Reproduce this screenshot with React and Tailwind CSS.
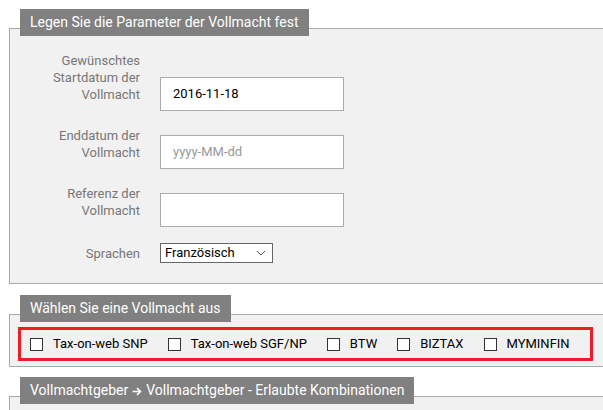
import React from "react";

const font = { fontFamily: "Roboto, 'Liberation Sans', sans-serif" };

function Legend({ children }) {
  return (
    <div className="relative z-10 ml-[11px] inline-block h-[27px] bg-[#808080] px-[10px] text-[14px] leading-[27px] text-white">
      {children}
    </div>
  );
}

function Row({ label, children, center }) {
  return (
    <div className={`flex ${center ? "items-center" : "items-end"}`}>
      <div
        className={`w-[130px] shrink-0 text-right text-[13px] leading-[17px] text-[#777777] ${
          center ? "" : "pb-[8px]"
        }`}
      >
        {label}
      </div>
      <div className="ml-[20px]">{children}</div>
    </div>
  );
}

function TextInput({ value, placeholder }) {
  return (
    <div className="flex h-[34px] w-[184px] items-center border border-[#aaaaaa] bg-white px-[12px] text-[13px]">
      {value ? (
        <span className="text-black">{value}</span>
      ) : (
        <span className="text-[#999999]">{placeholder}</span>
      )}
    </div>
  );
}

function Check({ label }) {
  return (
    <div className="flex items-center">
      <span className="block h-[13px] w-[13px] border border-[#333333] bg-white" />
      <span className="ml-[10px] text-[13px] text-black">{label}</span>
    </div>
  );
}

function Arrow() {
  return (
    <svg className="mx-[4px] inline-block align-middle" width="10" height="9" viewBox="0 0 10 9" fill="none">
      <path d="M0.5 4.5h8M5 1l3.5 3.5L5 8" stroke="white" strokeWidth="1.6" />
    </svg>
  );
}

export default function App() {
  return (
    <div className="h-[410px] w-[603px] overflow-hidden bg-white pt-[9px]" style={font}>
      <div className="ml-[9px] w-[640px]">
        {/* Panel 1 */}
        <Legend>Legen Sie die Parameter der Vollmacht fest</Legend>
        <div className="-mt-[8px] border border-[#aaaaaa] bg-[#f1f1f1] pt-[23px] pb-[20px]">
          <div className="flex flex-col gap-4">
            <Row label={<>Gewünschtes<br />Startdatum der<br />Vollmacht</>}>
              <TextInput value="2016-11-18" />
            </Row>
            <Row label={<>Enddatum der<br />Vollmacht</>}>
              <TextInput placeholder="yyyy-MM-dd" />
            </Row>
            <Row label={<>Referenz der<br />Vollmacht</>}>
              <TextInput />
            </Row>
            <Row label="Sprachen" center>
              <div className="flex h-[20px] w-[113px] items-center justify-between border border-[#666666] bg-white pl-[4px] pr-[6px] text-[13px] text-black">
                <span>Französisch</span>
                <svg width="10" height="6" viewBox="0 0 10 6" fill="none">
                  <path d="M1 1l4 4 4-4" stroke="#555" strokeWidth="1" />
                </svg>
              </div>
            </Row>
          </div>
        </div>

        {/* Panel 2 */}
        <div className="mt-[11px]">
          <Legend>Wählen Sie eine Vollmacht aus</Legend>
        </div>
        <div className="-mt-[8px] border border-[#aaaaaa] bg-[#f1f1f1] pt-[12px] pb-[5px] pl-[8px]">
          <div className="flex h-[34px] w-[575px] items-center gap-[20px] border-[3px] border-[#ee1c25] pl-[9px]">
            <Check label="Tax-on-web SNP" />
            <Check label="Tax-on-web SGF/NP" />
            <Check label="BTW" />
            <Check label="BIZTAX" />
            <Check label="MYMINFIN" />
          </div>
        </div>

        {/* Panel 3 */}
        <div className="mt-[10px]">
          <Legend>
            Vollmachtgeber<Arrow />Vollmachtgeber - Erlaubte Kombinationen
          </Legend>
        </div>
        <div className="-mt-[8px] h-[60px] border border-[#aaaaaa] bg-[#f1f1f1]" />
      </div>
    </div>
  );
}
